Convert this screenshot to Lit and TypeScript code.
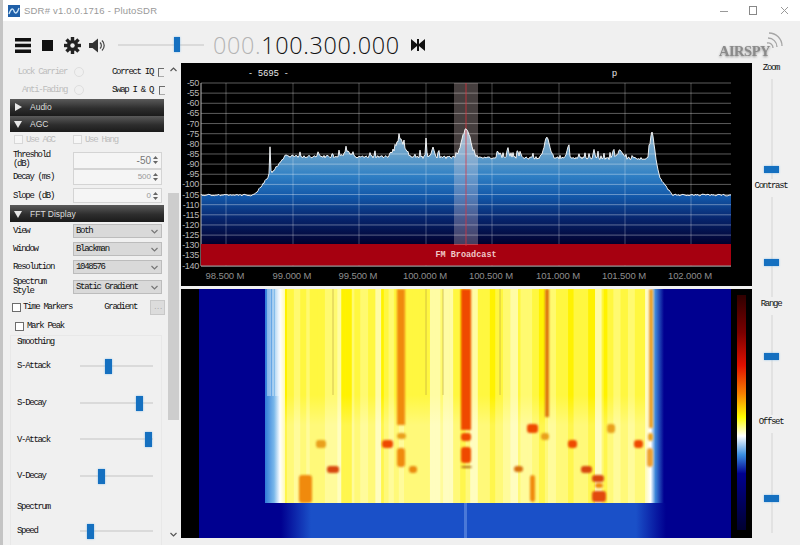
import { LitElement, html, css, svg } from "lit";
import { customElement } from "lit/decorators.js";

function rng(seed: number) {
  let s = seed;
  return () => {
    s = (s * 16807) % 2147483647;
    return s / 2147483647;
  };
}

const bumps: [number, number, number][] = [
  [400, 18, 6], [466, 28, 6], [547, 20, 4], [652, 26, 2.6], [568, 12, 1.6],
  [426, 18, 0.8], [433, 9, 2], [620, 8, 3.5], [508, 9, 1.2], [500, 6, 1.5], [347, 6, 4],
  [270, 28, 0.7], [520, 7, 1], [594, 8, 1], [613, 8, 1],
];

function envelope(x: number) {
  const lo = 195, hi = 156;
  let y: number;
  if (x < 254) y = lo;
  else if (x < 262) y = lo - (x - 254) * 1.2;
  else if (x < 285) y = 185 - ((x - 262) / 23) * 29;
  else if (x < 655) y = hi + (x - 285) * 0.006;
  else if (x < 660) y = 158 + (x - 655) * 4;
  else if (x < 672) y = 178 + (x - 660) * 1.4;
  else y = lo;
  for (const [c, h, w] of bumps) {
    const d = (x - c) / w;
    y -= h * Math.exp(-d * d);
  }
  return y;
}

function tracePoints() {
  const r = rng(4711);
  const pts: string[] = [];
  for (let x = 201; x <= 731; x += 1) {
    const plateau = x > 280 && x < 655;
    const n = plateau ? (r() > 0.86 ? -2 - r() * 5 : r() * 2.6 - 1) : r() * 1.8 - 0.9;
    pts.push(`${x},${(envelope(x) + n).toFixed(1)}`);
  }
  return pts;
}

const dbLevels = Array.from({ length: 19 }, (_, i) => -50 - i * 5);
const freqs: [number, string][] = [
  [226, "98.500 M"], [293, "99.000 M"], [359, "99.500 M"], [426, "100.000 M"],
  [492, "100.500 M"], [559, "101.000 M"], [625, "101.500 M"], [691, "102.000 M"],
];

function spectrum() {
  const pts = tracePoints();
  const area = `201,244 ${pts.join(" ")} 731,244`;
  return html`<svg class="plot" viewBox="181 63 571 223" width="571" height="223">
    <defs>
      <linearGradient id="fill" gradientUnits="userSpaceOnUse" x1="0" y1="120" x2="0" y2="244">
        <stop offset="0" stop-color="#a9bdc9"/>
        <stop offset="0.3" stop-color="#5f9cc9"/>
        <stop offset="0.45" stop-color="#2f7fc4"/>
        <stop offset="0.62" stop-color="#1257a8"/>
        <stop offset="0.8" stop-color="#07246c"/>
        <stop offset="1" stop-color="#00002e"/>
      </linearGradient>
    </defs>
    <rect x="181" y="63" width="571" height="223" fill="#000"/>
    ${svg`<polygon points=${area} fill="url(#fill)"/>`}
    ${dbLevels.map((d, i) => {
      const y = 83 + i * 10.14;
      return svg`<line x1="201" x2="731" y1=${y} y2=${y} stroke="#fff" stroke-opacity="0.36"/>
        <text class="db" x="199" y=${y + 3} text-anchor="end">${d}</text>`;
    })}
    ${freqs.map(([x, t]) => svg`<line x1=${x} x2=${x} y1="83" y2="266" stroke="#fff" stroke-opacity="0.28"/>
      <text class="fq" x=${x - 1} y="279" text-anchor="middle">${t}</text>`)}
    <line x1="201" x2="201" y1="83" y2="266" stroke="#bbb"/>
    <line x1="201" x2="731" y1="266" y2="266" stroke="#ddd"/>
    <rect x="201" y="244" width="530" height="21.5" fill="#a60010"/>
    <rect x="454" y="83" width="24" height="162" fill="#ffe4e4" fill-opacity="0.27"/>
    <line x1="466" x2="466" y1="83" y2="246" stroke="#e0303c" stroke-opacity="0.75"/>
    <polyline points=${pts.join(" ")} fill="none" stroke="#fff" stroke-width="1" stroke-opacity="0.9"/>
    <text class="band" x="466" y="257" text-anchor="middle">FM Broadcast</text>
    <text class="top" x="249" y="76">- \u00a05695\u00a0 -</text>
    <text class="top" x="612" y="76">p</text>
  </svg>`;
}

const orange = "#f08a10", deep = "#ef4a06", red = "#d8460a";
const blobs: [number, number, number, number, string][] = [
  [316, 440, 10, 8, "#e9a01a"], [382, 440, 11, 8, deep], [397, 433, 9, 6, "#e9a01a"],
  [397, 448, 8, 19, orange], [327, 466, 12, 7, red], [409, 466, 8, 7, "#ea8a10"],
  [299, 475, 13, 28, orange], [527, 424, 11, 9, deep], [607, 424, 8, 9, "#e9a01a"],
  [541, 433, 8, 7, "#e9a01a"], [568, 440, 9, 8, deep], [634, 440, 9, 8, deep],
  [514, 466, 9, 6, "#d8700c"], [581, 466, 11, 7, red], [530, 475, 5, 27, orange],
  [592, 475, 12, 7, red], [595, 483, 8, 5, orange], [592, 491, 14, 11, "#e24808"],
  [648, 433, 5, 8, "#e9a01a"], [647, 448, 6, 19, "#eda030"],
  [461, 433, 10, 8, deep], [461, 447, 10, 16, deep], [461, 466, 11, 2, "#b06a10"],
];

function waterfall() {
  const r = rng(99);
  const stripes: ReturnType<typeof svg>[] = [];
  let x = 285;
  while (x < 655) {
    const w = 2 + r() * 6;
    const v = r();
    const c = v < 0.18 ? "#fff200" : v < 0.5 ? "#fff740" : v < 0.85 ? "#fffa70" : "#fffca4";
    stripes.push(svg`<rect x=${x} y="289" width=${w + 0.5} height="214" fill=${c}/>`);
    x += w;
  }
  const fine: ReturnType<typeof svg>[] = [];
  for (const fx of [333, 426, 443, 500]) {
    fine.push(svg`<line x1=${fx} x2=${fx} y1="289" y2="395" stroke="#b9a040" stroke-opacity="0.6"/>`);
  }
  const streaks: ReturnType<typeof svg>[] = [];
  for (const sx of [268, 270, 273, 276, 278]) {
    streaks.push(svg`<line x1=${sx} x2=${sx} y1="289" y2="396" stroke="#fff" stroke-opacity="0.75"/>`);
  }
  return html`<svg class="plot" viewBox="181 289 571 249" width="571" height="249">
    <defs>
      <linearGradient id="edgeL" x1="0" x2="1" y1="0" y2="0">
        <stop offset="0" stop-color="#2f7ad8"/><stop offset="0.45" stop-color="#7ab8ea"/>
        <stop offset="0.75" stop-color="#fff"/><stop offset="1" stop-color="#fffbb0"/>
      </linearGradient>
      <linearGradient id="edgeR" x1="0" x2="1" y1="0" y2="0">
        <stop offset="0" stop-color="#fffbb0"/><stop offset="0.3" stop-color="#fff"/>
        <stop offset="0.55" stop-color="#3d86d8"/><stop offset="1" stop-color="#000090"/>
      </linearGradient>
      <linearGradient id="pale" x1="0" x2="0" y1="0" y2="1">
        <stop offset="0" stop-color="#fff" stop-opacity="0"/>
        <stop offset="1" stop-color="#fff" stop-opacity="0.3"/>
      </linearGradient>
      <linearGradient id="botL" x1="0" x2="1" y1="0" y2="0">
        <stop offset="0" stop-color="#000090"/><stop offset="1" stop-color="#1a50c8"/>
      </linearGradient>
      <linearGradient id="botR" x1="0" x2="1" y1="0" y2="0">
        <stop offset="0" stop-color="#1a50c8"/><stop offset="1" stop-color="#000090"/>
      </linearGradient>
      <linearGradient id="scale" x1="0" x2="0" y1="0" y2="1">
        <stop offset="0" stop-color="#300000"/><stop offset="0.16" stop-color="#7a0000"/>
        <stop offset="0.3" stop-color="#e01000"/><stop offset="0.42" stop-color="#f88000"/>
        <stop offset="0.52" stop-color="#ffff00"/><stop offset="0.6" stop-color="#fff"/>
        <stop offset="0.68" stop-color="#3a8ee0"/><stop offset="0.76" stop-color="#000090"/>
        <stop offset="1" stop-color="#000030"/>
      </linearGradient>
      <filter id="soft" x="-30%" y="-30%" width="160%" height="160%"><feGaussianBlur stdDeviation="1.100"/></filter>
    </defs>
    <rect x="181" y="289" width="571" height="249" fill="#000"/>
    <rect x="199" y="289" width="532" height="249" fill="#000090"/>
    <rect x="265" y="289" width="20" height="214" fill="url(#edgeL)"/>
    ${streaks}
    <rect x="285" y="289" width="370" height="214" fill="#fff640"/>
    ${stripes}
    ${fine}
    <rect x="285" y="395" width="370" height="30" fill="url(#pale)"/>
    <rect x="285" y="425" width="370" height="78" fill="#fff" fill-opacity="0.3"/>
    <rect x="645" y="289" width="19" height="214" fill="url(#edgeR)"/>
    <g filter="url(#soft)">
      <rect x="397" y="289" width="8" height="136" fill="#f08a10"/>
      <rect x="461" y="289" width="10" height="141" fill="#ef4a06"/>
      <rect x="545" y="289" width="4" height="128" fill="#dc7408"/>
      <rect x="649" y="289" width="4" height="139" fill="#eaa024"/>
      ${blobs.map(([bx, by, w, h, c]) => svg`<rect x=${bx} y=${by} width=${w} height=${h} rx="3" fill=${c}/>`)}
    </g>
    <rect x="281" y="503" width="30" height="35" fill="url(#botL)"/>
    <rect x="311" y="503" width="325" height="35" fill="#1a50c8"/>
    <rect x="636" y="503" width="30" height="35" fill="url(#botR)"/>
    <rect x="464" y="503" width="3" height="35" fill="#4a78d8"/>
    <rect x="737" y="295" width="9" height="235" fill="url(#scale)"/>
    <rect x="181" y="289" width="18" height="249" fill="#000"/>
  </svg>`;
}

@customElement("app-root")
export class AppRoot extends LitElement {
  static styles = css`
    :host { display: block; width: 800px; height: 545px; overflow: hidden; background: #f0f0f0; font-family: "Liberation Mono", monospace; color: #111; }
    .frame { width: 800px; height: 545px; display: flex; flex-direction: column; border-left: 3px solid #c4c4c4; box-sizing: border-box; }
    .titlebar { height: 21px; flex: none; background: #fff; display: flex; align-items: center; padding-left: 5px; gap: 4px; }
    .appname { font: 9.5px "Liberation Sans", sans-serif; color: #999; letter-spacing: 0.2px; flex: 1; }
    .win { display: flex; gap: 0; align-items: center; }
    .win svg { display: block; }
    .toolbar { height: 42px; flex: none; display: flex; align-items: center; box-sizing: border-box; padding: 6px 0 0 12px; position: relative; }
    .tool { display: block; flex: none; }
    .hslider { width: 86px; height: 16px; margin-left: 12px; }
    .freq { margin-left: 9px; margin-top: -1px; font: 300 23.4px "Open Sans", sans-serif; color: #111; letter-spacing: 0.65px; white-space: nowrap; }
    .freq span { color: #b4b4b4; }
    .logo { position: absolute; left: 714px; top: 9px; }
    .logo text { font: bold 14.5px "Liberation Serif", serif; fill: #8a8a8a; letter-spacing: -0.5px; filter: drop-shadow(0 1px 1px #9a9a9a); }
    .body { flex: 1; display: flex; min-height: 0; }
    .left { width: 176px; flex: none; display: flex; }
    .panel { width: 162px; flex: none; display: flex; flex-direction: column; overflow: hidden; font-size: 9px; letter-spacing: -1.3px; padding-left: 7px; box-sizing: border-box; white-space: nowrap; }
    .panel > * { flex: none; }
    .scroll { width: 11px; margin-left: 3px; flex: none; position: relative; }
    .scroll .thumb { position: absolute; left: 0; top: 130px; width: 11px; height: 227px; background: #cdcdcd; }
    .arrow { position: absolute; left: 0; width: 11px; }
    .arrow svg { display: block; margin: 0 auto; }
    .toprow { display: grid; grid-template-columns: 102px auto; height: 18px; align-items: center; }
    .cell { display: flex; align-items: center; }
    .dim { color: #bdbdbd; }
    .r { justify-content: flex-end; width: 74px; gap: 7px; }
    .q1 { gap: 5px; }
    .q2 { gap: 6px; }
    .head { height: 16.5px; width: 154px; background: linear-gradient(#5a5a5a, #2e2e2e 55%, #1b1b1b); color: #ddd; font: 8.5px "Liberation Sans", sans-serif; letter-spacing: 0; display: flex; align-items: center; padding-left: 4px; box-sizing: border-box; gap: 8px; }
    .head.tall { height: 17px; margin-top: 2px; }
    .form { display: grid; grid-template-columns: 60px 89px; align-items: center; padding-left: 3px; }
    .form.checks { padding-left: 4px; grid-template-columns: 59px 85px; height: 15px; gap: 0; }
    .form.thresh { height: 17px; margin-top: 4px; }
    .form.decay { height: 17px; }
    .form.slope { height: 15px; margin-top: 3px; }
    .form.sel { height: 18px; }
    .form.sel2 { height: 22px; }
    .box { height: 15px; border: 1px solid #d4d4d4; background: #f5f5f5; box-sizing: border-box; display: flex; align-items: center; justify-content: flex-end; padding-right: 3px; gap: 2px; }
    .box.b17 { height: 17px; }
    .box.b16 { height: 16px; }
    .box .v { color: #999; font-family: "Liberation Sans", sans-serif; letter-spacing: 0; font-size: 8px; }
    .box .v.big { font-size: 10px; color: #777; }
    .spin { width: 5px; display: flex; flex-direction: column; gap: 2px; }
    .select { height: 14px; background: #d9d9d9; border: 1px solid #bcbcbc; box-sizing: border-box; display: flex; align-items: center; justify-content: space-between; padding: 0 3px 0 2px; }
    .lab2 { line-height: 9px; }
    .chk { width: 9px; height: 9px; border: 1px solid #6c6c6c; background: #fff; box-sizing: border-box; flex: none; }
    .chk.small { width: 6px; height: 9px; border-right: none; border-bottom-color: #aaa; background: transparent; }
    .chk.off { border-color: #d8d8d8; background: #f6f6f6; }
    .lbl-gap { gap: 3px; }
    .round { width: 8px; height: 8px; border: 1px solid #dedede; border-radius: 50%; flex: none; }
    .timerow { display: flex; align-items: center; height: 16px; padding-left: 2px; margin-top: 1px; gap: 2px; }
    .grad { margin-left: 30px; width: 44px; }
    .gbtn { width: 15px; height: 15px; background: #dcdcdc; border: 1px solid #c8c8c8; box-sizing: border-box; color: #aaa; font-size: 7px; display: flex; align-items: center; justify-content: center; }
    .peak { display: flex; align-items: center; gap: 3px; padding-left: 5px; height: 16px; margin-top: 3px; }
    .group { margin-top: 1px; padding-left: 6px; width: 152px; box-sizing: border-box; border-top: 1px solid #e8e8e8; border-left: 1px solid #e8e8e8; border-right: 1px solid #e8e8e8; }
    .gtitle { height: 12px; display: flex; align-items: center; }
    .gtitle.second { margin-top: 6px; }
    .slide { display: grid; grid-template-columns: 63px 73px; align-items: center; height: 36.7px; }
    .track { height: 19px; position: relative; }
    .track::before { content: ""; position: absolute; left: 0; right: 0; top: 8px; height: 2px; background: #dadada; }
    .thumbh { position: absolute; top: 2px; width: 7px; height: 15px; background: #1570c0; box-shadow: 0 0 2px #7ab8e8; }
    .thumbh.top { top: 1px; width: 6px; left: 56px; }
    .main { width: 571px; flex: none; display: flex; flex-direction: column; gap: 3px; margin-left: 2px; }
    .plot { display: block; }
    .db { font: 9px "Liberation Sans", sans-serif; fill: #b8b8b8; letter-spacing: -0.3px; }
    .fq { font: 9.5px "Liberation Sans", sans-serif; fill: #8e8e8e; letter-spacing: -0.1px; }
    .band { font: bold 8.5px "Liberation Mono", monospace; fill: #f0c8c8; }
    .top { font: 9px "Liberation Sans", sans-serif; fill: #e8e8e8; letter-spacing: 0.3px; white-space: pre; }
    .right { flex: 1; display: flex; flex-direction: column; font-size: 9px; letter-spacing: -1.3px; padding-right: 10px; box-sizing: border-box; }
    .vs { height: 118px; flex: none; display: flex; flex-direction: column; align-items: center; }
    .vlabel { height: 10px; display: flex; align-items: center; margin-bottom: 6px; }
    .vtrack { width: 15px; height: 100px; position: relative; }
    .vtrack::before { content: ""; position: absolute; left: 7px; top: 0; bottom: 0; width: 2px; background: #e2e2e2; }
    .thumbv { position: absolute; left: 0; width: 15px; height: 7px; background: #1570c0; box-shadow: 0 0 2px #7ab8e8; }
    .gap1 { margin-left: 11px; }
    .gap2 { margin-left: 8px; }
    .gap3 { margin-left: 11px; }
    .spacer { width: 6px; }
  `;

  private spinner() {
    return html`<span class="spin">
      <svg width="5" height="3" viewBox="0 0 5 3"><path d="M0 3 2.5 0 5 3z" fill="#666"/></svg>
      <svg width="5" height="3" viewBox="0 0 5 3"><path d="M0 0 2.5 3 5 0z" fill="#666"/></svg>
    </span>`;
  }

  private chev() {
    return html`<svg width="7" height="5" viewBox="0 0 7 5"><path d="M0.5 1 3.5 4 6.5 1" fill="none" stroke="#777" stroke-width="1.2"/></svg>`;
  }

  private head(title: string, open: boolean, tall = false) {
    return html`<div class="head ${tall ? "tall" : ""}">
      <svg width="8" height="8" viewBox="0 0 8 8"><path d=${open ? "M0 1H8L4 8z" : "M1 0V8L8 4z"} fill="#e8e8e8"/></svg>
      <span>${title}</span>
    </div>`;
  }

  private slideRow(label: string, pos: number) {
    return html`<div class="slide"><span>${label}</span><div class="track"><span class="thumbh" style="left:${pos}px"></span></div></div>`;
  }

  private vSlider(label: string, pos: number) {
    return html`<div class="vs">
      <span class="vlabel">${label}</span>
      <div class="vtrack"><span class="thumbv" style="top:${pos}px"></span></div>
    </div>`;
  }

  render() {
    return html`<div class="frame">
      <div class="titlebar">
        <svg width="12" height="12" viewBox="0 0 12 12"><rect width="12" height="12" fill="#1f5fa8"/><path d="M1 9C3 3 5 3 6 6S9 9 11 3" fill="none" stroke="#cfe6f8" stroke-width="1.3"/></svg>
        <span class="appname">SDR# v1.0.0.1716 - PlutoSDR</span>
        <div class="win">
          <svg width="74" height="14" viewBox="0 0 74 14">
            <path d="M0 7.5H8" stroke="#999"/>
            <rect x="29.5" y="2.5" width="7" height="8" fill="none" stroke="#888"/>
            <path d="M61 3 68 10M68 3 61 10" stroke="#999" stroke-width="1"/>
          </svg>
          <span class="spacer"></span>
        </div>
      </div>
      <div class="toolbar">
        <svg class="tool" width="16" height="15" viewBox="0 0 16 15"><path d="M0 0h16v3.4H0zM0 5.8h16v3.4H0zM0 11.6h16V15H0z" fill="#111"/></svg>
        <svg class="tool gap1" width="11" height="11" viewBox="0 0 11 11"><rect width="11" height="11" fill="#111"/></svg>
        <svg class="tool gap1" width="17" height="17" viewBox="0 0 17 17">
          <g fill="#222"><circle cx="8.5" cy="8.5" r="5.6"/>
            ${[0, 45, 90, 135, 180, 225, 270, 315].map((a) => svg`<rect x="6.8" y="0" width="3.4" height="4.5" transform="rotate(${a} 8.5 8.5)"/>`)}
          </g><circle cx="8.5" cy="8.5" r="2.2" fill="#f0f0f0"/>
        </svg>
        <svg class="tool gap2" width="17" height="15" viewBox="0 0 17 15">
          <path d="M0 5h3.5L9 .5v14L3.500 10H0z" fill="#333"/>
          <path d="M11 4.500a4 4 0 0 1 0 6M13 2.500a6.800 6.800 0 0 1 0 10" fill="none" stroke="#444" stroke-width="1.200"/>
        </svg>
        <div class="hslider track"><span class="thumbh top"></span></div>
        <div class="freq"><span>000.</span>100.300.000</div>
        <svg class="tool gap3" width="14" height="12" viewBox="0 0 14 12"><path d="M0 0 6 5V0h2v5l6-5v12L8 7v5H6V7L0 12z" fill="#111"/></svg>
        <svg class="logo" width="72" height="30" viewBox="0 0 72 30">
          <text x="2" y="26">AIRSPY</text>
          <path d="M50 13a5 5 0 0 1 6 5M51 8a9 9 0 0 1 9 9M52 3a13 13 0 0 1 13 13" fill="none" stroke="#a6a6a6" stroke-width="1.300"/>
        </svg>
      </div>
      <div class="body">
        <div class="left">
          <div class="panel">
            <div class="toprow">
              <div class="cell r dim"><span>Lock Carrier</span><span class="round"></span></div>
              <div class="cell q1"><span>Correct IQ</span><span class="chk small"></span></div>
            </div>
            <div class="toprow">
              <div class="cell r dim"><span>Anti-Fading</span><span class="round"></span></div>
              <div class="cell q2"><span>Swap I &amp; Q</span><span class="chk small"></span></div>
            </div>
            ${this.head("Audio", false)}
            ${this.head("AGC", true)}
            <div class="form checks">
              <div class="cell dim lbl-gap"><span class="chk off"></span><span>Use AGC</span></div>
              <div class="cell dim lbl-gap"><span class="chk off"></span><span>Use Hang</span></div>
            </div>
            <div class="form thresh">
              <span class="lab2">Threshold<br />(dB)</span>
              <div class="box b17"><span class="v big">-50</span>${this.spinner()}</div>
            </div>
            <div class="form decay">
              <span>Decay (ms)</span>
              <div class="box b16"><span class="v">500</span>${this.spinner()}</div>
            </div>
            <div class="form slope">
              <span>Slope (dB)</span>
              <div class="box"><span class="v">0</span>${this.spinner()}</div>
            </div>
            ${this.head("FFT Display", true, true)}
            <div class="form sel"><span>View</span><div class="select"><span>Both</span>${this.chev()}</div></div>
            <div class="form sel"><span>Window</span><div class="select"><span>Blackman</span>${this.chev()}</div></div>
            <div class="form sel"><span>Resolution</span><div class="select"><span>1048576</span>${this.chev()}</div></div>
            <div class="form sel2"><span class="lab2">Spectrum<br />Style</span><div class="select"><span>Static Gradient</span>${this.chev()}</div></div>
            <div class="timerow"><span class="chk"></span><span>Time Markers</span><span class="grad">Gradient</span><span class="gbtn">...</span></div>
            <div class="peak"><span class="chk"></span><span>Mark Peak</span></div>
            <div class="group">
              <div class="gtitle">Smoothing</div>
              ${this.slideRow("S-Attack", 25)}
              ${this.slideRow("S-Decay", 56)}
              ${this.slideRow("V-Attack", 65)}
              ${this.slideRow("V-Decay", 18)}
              <div class="gtitle second">Spectrum</div>
              ${this.slideRow("Speed", 7)}
            </div>
          </div>
          <div class="scroll">
            <span class="thumb"></span>
            <span class="arrow" style="top:4px"><svg width="7" height="5" viewBox="0 0 7 5"><path d="M0.500 4 3.500 1 6.500 4" fill="none" stroke="#555" stroke-width="1.200"/></svg></span>
            <span class="arrow" style="top:469px"><svg width="7" height="5" viewBox="0 0 7 5"><path d="M0.500 1 3.500 4 6.500 1" fill="none" stroke="#555" stroke-width="1.200"/></svg></span>
          </div>
        </div>
        <div class="main">
          ${spectrum()}
          ${waterfall()}
        </div>
        <div class="right">
          ${this.vSlider("Zoom", 86.5)}
          ${this.vSlider("Contrast", 61.5)}
          ${this.vSlider("Range", 37.5)}
          ${this.vSlider("Offset", 61.5)}
        </div>
      </div>
    </div>`;
  }
}
